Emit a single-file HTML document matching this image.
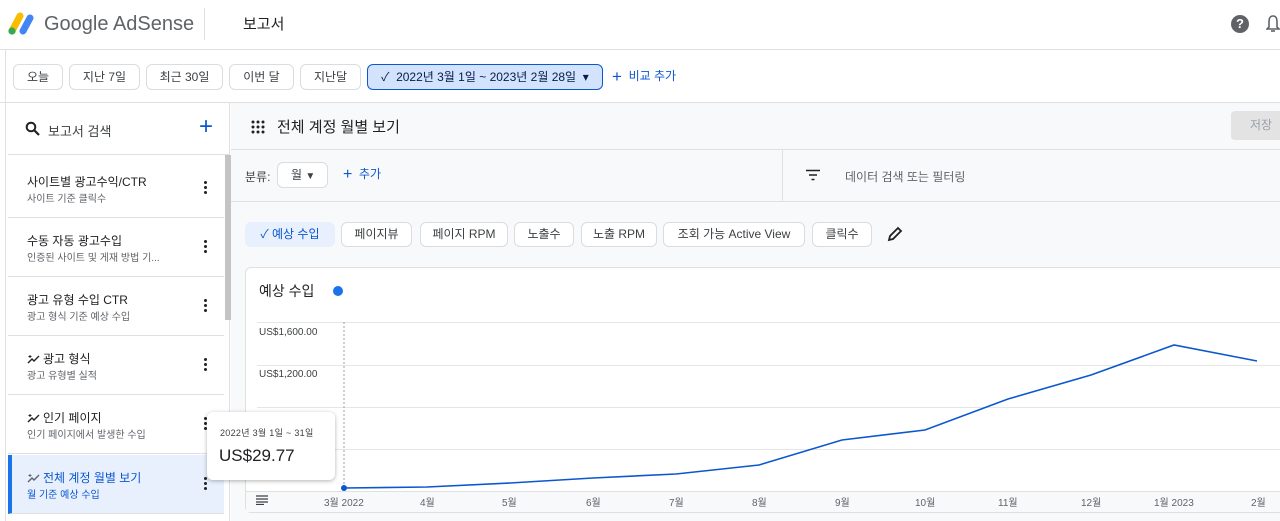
<!DOCTYPE html>
<html><head><meta charset="utf-8"><style>
*{box-sizing:border-box;margin:0;padding:0}
body{width:1280px;height:521px;overflow:hidden;background:#fff;font-family:"Liberation Sans","Noto Sans CJK KR",sans-serif;color:#202124;position:relative}
.a{position:absolute}
.chip{position:absolute;top:64px;height:26px;border:1px solid #dadce0;border-radius:6px;font-size:12px;line-height:24px;text-align:center;color:#3c4043;background:#fff}
.item{position:absolute;left:8px;width:216px;height:59px;border-bottom:1px solid #e0e0e0;background:#fff}
.item .t{position:absolute;left:19px;top:14px;font-size:12px;color:#202124}
.item .s{position:absolute;left:19px;top:31px;font-size:10px;color:#5f6368}
.sp{display:inline-block;width:13px;height:10px;vertical-align:-1px;margin-right:3px}
.dots{position:absolute;left:196px;top:22px;width:4px}
.dots i{display:block;width:3px;height:3px;border-radius:50%;background:#202124;margin-bottom:2px}
.m{position:absolute;top:222px;height:25px;border:1px solid #dadce0;border-radius:6px;background:#fff;font-size:12px;line-height:23px;color:#3c4043;text-align:center}
.xl{position:absolute;top:494px;font-size:10px;color:#5f6368}
</style></head><body>
<svg class="a" style="left:8px;top:11px" width="28" height="24" viewBox="0 0 28 24"><path d="M4 20 L12 5" stroke="#fbbc04" stroke-width="7" stroke-linecap="round"/><path d="M15 20 L22 7" stroke="#4285f4" stroke-width="7" stroke-linecap="round"/><circle cx="4" cy="20" r="3.6" fill="#34a853"/></svg>
<div class="a" style="left:44px;top:13px;font-size:20px;color:#5f6368">Google AdSense</div>
<div class="a" style="left:204px;top:8px;width:1px;height:32px;background:#e0e0e0"></div>
<div class="a" style="left:243px;top:13px;font-size:15px;color:#202124">보고서</div>
<div class="a" style="left:1231px;top:15px;width:18px;height:18px;border-radius:50%;background:#5f6368;color:#fff;font-size:13px;font-weight:bold;text-align:center;line-height:18px">?</div>
<svg class="a" style="left:1266px;top:14px" width="14" height="20"><path d="M7 2 C3 2 3 6 3 9 L3 13 L1 15 L13 15 L11 13 L11 9 C11 6 11 2 7 2Z" fill="none" stroke="#5f6368" stroke-width="1.6"/><path d="M5 17 h4" stroke="#5f6368" stroke-width="1.6"/></svg>
<div class="a" style="left:0;top:49px;width:1280px;height:1px;background:#e0e0e0"></div>
<div class="a" style="left:5px;top:50px;width:1px;height:471px;background:#e0e0e0"></div>
<div class="chip" style="left:13px;width:50px">오늘</div>
<div class="chip" style="left:69px;width:71px">지난 7일</div>
<div class="chip" style="left:146px;width:77px">최근 30일</div>
<div class="chip" style="left:229px;width:65px">이번 달</div>
<div class="chip" style="left:300px;width:61px">지난달</div>
<div class="chip" style="left:367px;width:236px;background:#d3e3fd;border-color:#0b57d0;color:#041e49">✓&nbsp; 2022년 3월 1일 ~ 2023년 2월 28일 &nbsp;▾</div>
<div class="a" style="left:612px;top:67px;font-size:12px;color:#0b57d0"><span style="font-size:17px;vertical-align:-2px">+</span>&nbsp; 비교 추가</div>
<div class="a" style="left:0;top:102px;width:1280px;height:1px;background:#e0e0e0"></div>
<div class="a" style="left:8px;top:103px;width:222px;height:418px;background:#fff;border-right:1px solid #e0e0e0"></div>
<svg class="a" style="left:25px;top:121px" width="16" height="16"><circle cx="6" cy="6" r="4.3" fill="none" stroke="#202124" stroke-width="2"/><path d="M9 9 L14 14" stroke="#202124" stroke-width="2.2"/></svg>
<div class="a" style="left:48px;top:121px;font-size:13px;color:#3c4043">보고서 검색</div>
<div class="a" style="left:199px;top:113px;font-size:24px;color:#0b57d0;font-weight:300">+</div>
<div class="a" style="left:8px;top:154px;width:222px;height:1px;background:#e0e0e0"></div>
<div class="item" style="top:159px"><div class="t">사이트별 광고수익/CTR</div><div class="s">사이트 기준 클릭수</div><div class="dots"><i></i><i></i><i></i></div></div>
<div class="item" style="top:218px"><div class="t">수동 자동 광고수입</div><div class="s">인증된 사이트 및 게재 방법 기...</div><div class="dots"><i></i><i></i><i></i></div></div>
<div class="item" style="top:277px"><div class="t">광고 유형 수입 CTR</div><div class="s">광고 형식 기준 예상 수입</div><div class="dots"><i></i><i></i><i></i></div></div>
<div class="item" style="top:336px"><div class="t"><svg class="sp" viewBox="0 0 13 10"><path d="M1 9 L5 5 L7 7 L12 2" fill="none" stroke="#202124" stroke-width="1.4"/><path d="M3 1v3M1.5 2.5h3" stroke="#202124" stroke-width="1"/></svg>광고 형식</div><div class="s">광고 유형별 실적</div><div class="dots"><i></i><i></i><i></i></div></div>
<div class="item" style="top:395px"><div class="t"><svg class="sp" viewBox="0 0 13 10"><path d="M1 9 L5 5 L7 7 L12 2" fill="none" stroke="#202124" stroke-width="1.4"/><path d="M3 1v3M1.5 2.5h3" stroke="#202124" stroke-width="1"/></svg>인기 페이지</div><div class="s">인기 페이지에서 발생한 수입</div><div class="dots"><i></i><i></i><i></i></div></div>
<div class="item" style="top:455px;background:#e8f0fe;border-left:4px solid #1a73e8"><div class="t" style="left:15px;color:#0b57d0"><svg class="sp" viewBox="0 0 13 10"><path d="M1 9 L5 5 L7 7 L12 2" fill="none" stroke="#5f6368" stroke-width="1.4"/><path d="M3 1v3M1.5 2.5h3" stroke="#5f6368" stroke-width="1"/></svg>전체 계정 월별 보기</div><div class="s" style="left:15px;color:#0b57d0">월 기준 예상 수입</div><div class="dots" style="left:192px"><i></i><i></i><i></i></div></div>
<div class="a" style="left:225px;top:155px;width:6px;height:165px;background:#c4c4c4"></div>
<div class="a" style="left:231px;top:103px;width:1049px;height:418px;background:#f8f9fa"></div>
<svg class="a" style="left:251px;top:120px" width="14" height="14"><g fill="#202124"><circle cx="2" cy="2" r="1.5"/><circle cx="7" cy="2" r="1.5"/><circle cx="12" cy="2" r="1.5"/><circle cx="2" cy="7" r="1.5"/><circle cx="7" cy="7" r="1.5"/><circle cx="12" cy="7" r="1.5"/><circle cx="2" cy="12" r="1.5"/><circle cx="7" cy="12" r="1.5"/><circle cx="12" cy="12" r="1.5"/></g></svg>
<div class="a" style="left:277px;top:116px;font-size:15px;color:#202124">전체 계정 월별 보기</div>
<div class="a" style="left:1231px;top:111px;width:60px;height:29px;background:#e3e3e3;border-radius:4px;font-size:12px;color:#9aa0a6;line-height:29px;padding-left:19px">저장</div>
<div class="a" style="left:231px;top:149px;width:1049px;height:1px;background:#e0e0e0"></div>
<div class="a" style="left:245px;top:168px;font-size:12px;color:#3c4043">분류:</div>
<div class="a" style="left:277px;top:162px;width:51px;height:26px;border:1px solid #dadce0;border-radius:6px;background:#fff;font-size:12px;line-height:24px;padding-left:13px;color:#3c4043">월 <span style="font-size:10px">▼</span></div>
<div class="a" style="left:343px;top:165px;font-size:12px;color:#0b57d0"><span style="font-size:16px;vertical-align:-1px">+</span>&nbsp; 추가</div>
<div class="a" style="left:782px;top:150px;width:1px;height:51px;background:#e0e0e0"></div>
<svg class="a" style="left:805px;top:169px" width="16" height="12"><path d="M1 1.5h14M4 6h8M6.5 10.5h3" stroke="#202124" stroke-width="1.6"/></svg>
<div class="a" style="left:845px;top:168px;font-size:12px;color:#5f6368">데이터 검색 또는 필터링</div>
<div class="a" style="left:231px;top:201px;width:1049px;height:1px;background:#e0e0e0"></div>
<div class="m" style="left:245px;width:90px;background:#e8f0fe;border-color:#e8f0fe;color:#0b57d0">✓ 예상 수입</div>
<div class="m" style="left:341px;width:71px">페이지뷰</div>
<div class="m" style="left:420px;width:88px">페이지 RPM</div>
<div class="m" style="left:514px;width:60px">노출수</div>
<div class="m" style="left:581px;width:76px">노출 RPM</div>
<div class="m" style="left:663px;width:142px">조회 가능 Active View</div>
<div class="m" style="left:812px;width:60px">클릭수</div>
<svg class="a" style="left:887px;top:226px" width="16" height="16"><path d="M2 14 L3 10 L11 2 L14 5 L6 13 Z" fill="none" stroke="#202124" stroke-width="1.8"/></svg>
<div class="a" style="left:245px;top:267px;width:1045px;height:246px;background:#fff;border:1px solid #e0e0e0;border-radius:6px"></div>
<div class="a" style="left:259px;top:281px;font-size:14px;color:#202124">예상 수입</div>
<div class="a" style="left:333px;top:286px;width:10px;height:10px;border-radius:50%;background:#1a73e8"></div>
<div class="a" style="left:246px;top:491px;width:1034px;height:21px;background:#f8f9fa;border-top:1px solid #e0e0e0"></div>
<svg class="a" style="left:246px;top:300px" width="1034" height="200">
<g stroke="#e6e6e6" stroke-width="1"><path d="M11 22.5H1034M11 65.5H1034M11 107.5H1034M11 149.5H1034"/></g>
<path d="M98 22V188" stroke="#9aa0a6" stroke-width="1" stroke-dasharray="2,2"/>
<polyline fill="none" stroke="#0b57d0" stroke-width="1.6" points="98,188 181,187 264,183 347,178 430,174 513,165 596,140 679,130 762,99 845,75 928,45 1011,61"/>
<circle cx="98" cy="188" r="3" fill="#0b57d0"/>
</svg>
<div class="a" style="left:259px;top:327px;font-size:10px;color:#3c4043">US$1,600.00</div>
<div class="a" style="left:259px;top:369px;font-size:10px;color:#3c4043">US$1,200.00</div>
<svg class="a" style="left:255px;top:495px" width="14" height="10"><path d="M1 1h12M1 4h12M1 7h12M1 9.5h8" stroke="#3c4043" stroke-width="1.2"/></svg>
<div class="xl" style="left:324px">3월 2022</div><div class="xl" style="left:420px">4월</div><div class="xl" style="left:502px">5월</div><div class="xl" style="left:586px">6월</div><div class="xl" style="left:669px">7월</div><div class="xl" style="left:752px">8월</div><div class="xl" style="left:835px">9월</div><div class="xl" style="left:915px">10월</div><div class="xl" style="left:998px">11월</div><div class="xl" style="left:1081px">12월</div><div class="xl" style="left:1154px">1월 2023</div><div class="xl" style="left:1251px">2월</div>
<div class="a" style="left:207px;top:412px;width:128px;height:68px;background:#fff;border-radius:6px;box-shadow:0 1px 4px rgba(0,0,0,.3)">
<div class="a" style="left:13px;top:14px;font-size:9px;color:#3c4043;letter-spacing:.3px">2022년 3월 1일 ~ 31일</div>
<div class="a" style="left:12px;top:34px;font-size:17px;color:#202124">US$29.77</div></div>
</body></html>
